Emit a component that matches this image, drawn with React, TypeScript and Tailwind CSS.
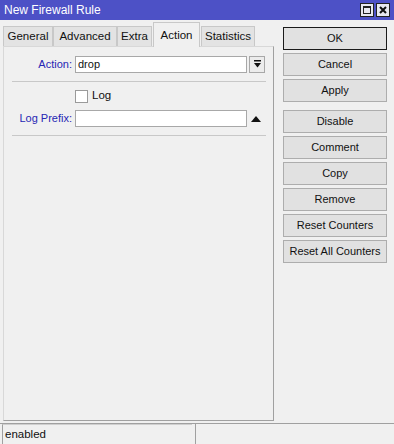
import React from "react";

const font = { fontFamily: '"Liberation Sans", Arial, sans-serif' };

function SideButton({ label, primary }: { label: string; primary?: boolean }) {
  return (
    <button
      className={`h-[23px] w-[104px] bg-[#e1e1e1] text-[11px] text-[#111] flex items-center justify-center ${
        primary ? "border border-[#1a1a1a]" : "border border-[#adadad]"
      }`}
    >
      {label}
    </button>
  );
}

export default function App() {
  const tabs = [
    { name: "General", w: "w-[50px]" },
    { name: "Advanced", w: "w-[64px]" },
    { name: "Extra", w: "w-[35px]" },
    { name: "Action", w: "w-[47px]" },
    { name: "Statistics", w: "w-[54px]" },
  ];
  const active = "Action";

  return (
    <div style={font} className="w-[394px] h-[444px] bg-[#f0f0f0] flex flex-col overflow-hidden text-[11.5px] text-[#111]">
      {/* title bar */}
      <div className="h-[20px] bg-[#4d51c6] flex items-center justify-between pl-[4px] pr-[4px]">
        <span className="text-white text-[12px] leading-none">New Firewall Rule</span>
        <div className="flex gap-[2px]">
          <div className="w-[14px] h-[14px] bg-[#e8e8f0] border border-[#222] flex items-center justify-center">
            <div className="w-[8px] h-[8px] border border-[#222] border-t-2" />
          </div>
          <div className="w-[14px] h-[14px] bg-[#e8e8f0] border border-[#222] flex items-center justify-center">
            <svg width="8" height="8" viewBox="0 0 8 8">
              <path d="M1 1 L7 7 M7 1 L1 7" stroke="#111" strokeWidth="2" />
            </svg>
          </div>
        </div>
      </div>

      {/* body */}
      <div className="flex-1 flex">
        {/* left: tabs + panel */}
        <div className="w-[274px] pl-[3px] flex flex-col pb-[2px]">
          <div className="h-[26px] flex items-end">
            {tabs.map((t) =>
              t.name === active ? (
                <div
                  key={t.name}
                  className={`${t.w} h-[25px] bg-[#f0f0f0] border border-b-0 border-[#c8c8c8] flex justify-center items-start pt-[4px] -mb-px relative z-10 mx-[1px]`}
                >
                  {t.name}
                </div>
              ) : (
                <div
                  key={t.name}
                  className={`${t.w} h-[20px] bg-[#e3e3e3] border border-b-0 border-[#c8c8c8] flex justify-center items-center`}
                >
                  {t.name}
                </div>
              )
            )}
          </div>
          <div className="flex-1 border border-t-[#d8d8d8] border-l-[#d8d8d8] border-r-[#a0a0a0] border-b-[#a0a0a0] px-[5px] pt-[9px] text-[11px]">
            <div className="flex items-center h-[17px]">
              <span className="w-[66px] text-right text-[#2626b4] pr-[3px]">Action:</span>
              <div className="w-[172px] h-[17px] bg-white border border-[#a8a8a8] flex items-center px-[2px]">drop</div>
              <div className="ml-[2px] w-[16px] h-[17px] border border-[#a8a8a8] bg-[#ececec] flex items-center justify-center">
                <svg width="9" height="9" viewBox="0 0 9 9">
                  <rect x="1" y="0" width="7" height="1.5" fill="#111" />
                  <path d="M1 3 H8 L4.5 7.5 Z" fill="#111" />
                </svg>
              </div>
            </div>
            <div className="h-px bg-[#c8c8c8] mt-[8px] ml-[3px] mr-[2px]" />
            <div className="flex items-center h-[14px] mt-[7px]">
              <div className="w-[66px]" />
              <div className="w-[13px] h-[13px] bg-white border border-[#9a9a9a]" />
              <span className="ml-[4px] text-[11.5px]">Log</span>
            </div>
            <div className="flex items-center h-[17px] mt-[7px]">
              <span className="w-[66px] text-right text-[#2626b4] pr-[3px]">Log Prefix:</span>
              <div className="w-[172px] h-[17px] bg-white border border-[#a8a8a8]" />
              <div className="ml-[1px] w-[16px] h-[17px] flex items-center justify-center">
                <svg width="10" height="6" viewBox="0 0 10 6">
                  <path d="M0 6 L5 0 L10 6 Z" fill="#111" />
                </svg>
              </div>
            </div>
            <div className="h-px bg-[#c8c8c8] mt-[8px] ml-[3px] mr-[2px]" />
          </div>
        </div>

        {/* right: buttons */}
        <div className="ml-[9px] pt-[7px] flex flex-col gap-[3px]">
          <SideButton label="OK" primary />
          <SideButton label="Cancel" />
          <SideButton label="Apply" />
          <div className="h-[2px]" />
          <SideButton label="Disable" />
          <SideButton label="Comment" />
          <SideButton label="Copy" />
          <SideButton label="Remove" />
          <SideButton label="Reset Counters" />
          <SideButton label="Reset All Counters" />
        </div>
      </div>

      {/* status bar */}
      <div className="h-[21px] border-t border-[#a0a0a0] flex gap-[3px] px-[2px]">
        <div className="w-[190px] h-[20px] border-l border-[#a0a0a0] border-t border-t-[#cfcfcf] flex items-center px-[2px]">enabled</div>
        <div className="flex-1 h-[20px] border-l border-[#a0a0a0]" />
      </div>
    </div>
  );
}
